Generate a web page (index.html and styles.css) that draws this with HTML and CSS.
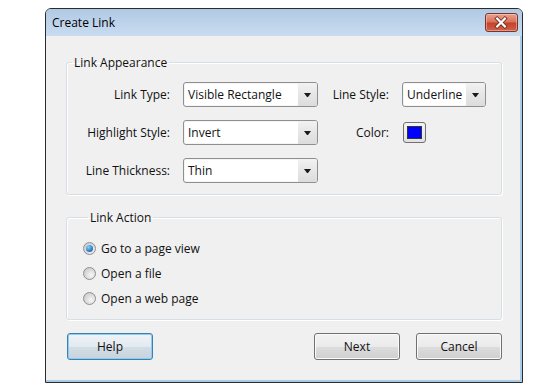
FILE: index.html
```html
<!DOCTYPE html>
<html lang="en">
<head>
  <meta charset="UTF-8" />
  <title>Create Link</title>
  <link rel="stylesheet" href="styles.css">
</head>
<body>
  <div class="dialog">
    <div class="titlebar">
      <span class="title">Create Link</span>
      <button class="close" title="Close">
        <svg width="33" height="19" viewBox="0 0 33 19">
          <path d="M12.5 5.5 L20.5 13.5 M20.5 5.5 L12.5 13.5" stroke="#6a2a1e" stroke-width="4" stroke-linecap="square" fill="none"/>
          <path d="M12.5 5.5 L20.5 13.5 M20.5 5.5 L12.5 13.5" stroke="#ffffff" stroke-width="2.2" stroke-linecap="square" fill="none"/>
        </svg>
      </button>
    </div>

    <div class="content">
      <fieldset class="group appearance">
        <legend>Link Appearance</legend>
        <div class="grid">
          <label class="lbl">Link Type:</label>
          <div class="combo"><span>Visible Rectangle</span><i class="arrow"></i></div>
          <label class="lbl">Line Style:</label>
          <div class="combo"><span>Underline</span><i class="arrow"></i></div>

          <label class="lbl">Highlight Style:</label>
          <div class="combo"><span>Invert</span><i class="arrow"></i></div>
          <label class="lbl">Color:</label>
          <div class="swatch"><span class="chip"></span></div>

          <label class="lbl">Line Thickness:</label>
          <div class="combo"><span>Thin</span><i class="arrow"></i></div>
        </div>
      </fieldset>

      <fieldset class="group action">
        <legend>Link Action</legend>
        <div class="radio checked"><span class="dot"></span>Go to a page view</div>
        <div class="radio"><span class="dot"></span>Open a file</div>
        <div class="radio"><span class="dot"></span>Open a web page</div>
      </fieldset>

      <div class="buttons">
        <button class="btn focused">Help</button>
        <span class="spacer"></span>
        <button class="btn">Next</button>
        <button class="btn">Cancel</button>
      </div>
    </div>
  </div>
</body>
</html>
```

FILE: styles.css
```css
* {
  box-sizing: border-box;
}

body {
  margin: 0;
  background: #ffffff;
  font-family: "Open Sans", "Noto Sans", sans-serif;
  font-size: 12px;
  color: #111;
}

.dialog {
  margin: 8px 0 0 45px;
  width: 478px;
  height: 375px;
  border: 1px solid #2b2b2b;
  border-radius: 6px 6px 0 0;
  background: #f0f0f0;
  display: flex;
  flex-direction: column;
  overflow: hidden;
}

/* title bar */
.titlebar {
  height: 27px;
  flex: none;
  display: flex;
  align-items: flex-start;
  justify-content: space-between;
  padding: 4px 4px 0 6px;
  background: linear-gradient(#afc9e5, #c0d5ec 60%, #c9dcef);
}

.title {
  line-height: 20px;
  color: #000;
}

.close {
  width: 33px;
  height: 19px;
  padding: 0;
  border: 1px solid #7e3326;
  border-radius: 3px;
  background: linear-gradient(#e8a28e, #d8735b 45%, #c4432a 55%, #d0624a);
  box-shadow: inset 0 0 0 1px rgba(255, 220, 210, 0.45);
  display: flex;
}

.close svg {
  margin: -1px 0 0 -1px;
}

/* body */
.content {
  flex: 1;
  padding: 0 18px 0 20px;
  border-right: 2px solid #a9cbe8;
  border-bottom: 2px solid #a9cbe8;
  display: flex;
  flex-direction: column;
}

.group {
  margin: 0;
  border: 1px solid #d5dfe5;
  border-radius: 3px;
  box-shadow: inset 1px 1px 0 #fff, 1px 1px 0 #fff;
  min-width: 0;
}

.group legend {
  margin-left: 5px;
  padding: 0 2px;
  line-height: 15px;
}

.appearance {
  margin-top: 19px;
  padding: 12px 0 11px 0;
}

.grid {
  display: grid;
  grid-template-columns: 116px 135px 84px 84px;
  grid-auto-rows: 25px;
  row-gap: 13px;
  align-items: center;
}

.lbl {
  text-align: right;
  padding-right: 13px;
  white-space: nowrap;
}

.combo {
  height: 25px;
  display: flex;
  align-items: center;
  border: 1px solid #8f8f8f;
  border-radius: 3px;
  background: #fff;
  box-shadow: inset 0 0 0 1px #f4f4f4;
  overflow: hidden;
}

.combo span {
  flex: 1;
  padding-left: 4px;
  white-space: nowrap;
  overflow: hidden;
}

.combo .arrow {
  width: 19px;
  height: 100%;
  flex: none;
  display: flex;
  align-items: center;
  justify-content: center;
  background: linear-gradient(#f2f2f2, #e6e6e6 50%, #dcdcdc);
}

.combo .arrow::after {
  content: "";
  width: 1px;
  height: 0;
  border-left: 3px solid transparent;
  border-right: 3px solid transparent;
  border-top: 4px solid #1a1a1a;
}

.swatch {
  width: 23px;
  height: 21px;
  margin-left: 1px;
  border: 1px solid #707070;
  border-radius: 3px;
  background: linear-gradient(#f4f4f4, #e2e2e2);
  display: flex;
  align-items: center;
  justify-content: center;
}

.chip {
  width: 15px;
  height: 13px;
  background: #0000ff;
  border: 1px solid #333;
}

/* link action */
.action {
  margin-top: 15px;
  padding: 11px 0 8px 16px;
}

.radio {
  height: 25px;
  display: flex;
  align-items: center;
  gap: 5px;
}

.dot {
  width: 13px;
  height: 13px;
  border-radius: 50%;
  border: 1px solid #8e8f8f;
  background: radial-gradient(circle at 65% 65%, #f6f6f6, #d6d6d6 60%, #c4c4c4);
  display: flex;
  align-items: center;
  justify-content: center;
}

.checked .dot::after {
  content: "";
  width: 7px;
  height: 7px;
  border-radius: 50%;
  background: radial-gradient(circle at 35% 30%, #8fd0f5, #2a7ec4 60%, #155a9b);
}

/* buttons */
.buttons {
  margin-top: 13px;
  display: flex;
  gap: 16px;
  padding-left: 1px;
}

.spacer {
  flex: 1;
}

.btn {
  width: 86px;
  height: 27px;
  font: inherit;
  color: #111;
  border: 1px solid #707070;
  border-radius: 3px;
  background: linear-gradient(#f2f2f2, #ebebeb 50%, #dddddd 51%, #cfcfcf);
  box-shadow: inset 0 0 0 1px #fbfbfb;
  padding: 0;
}

.btn.focused {
  border-color: #3c7fb1;
  background: linear-gradient(#eef3f7, #e3eaf0 50%, #d3dde6 51%, #c7d3dd);
  box-shadow: inset 0 0 0 1px #8ecdf0;
}
```
